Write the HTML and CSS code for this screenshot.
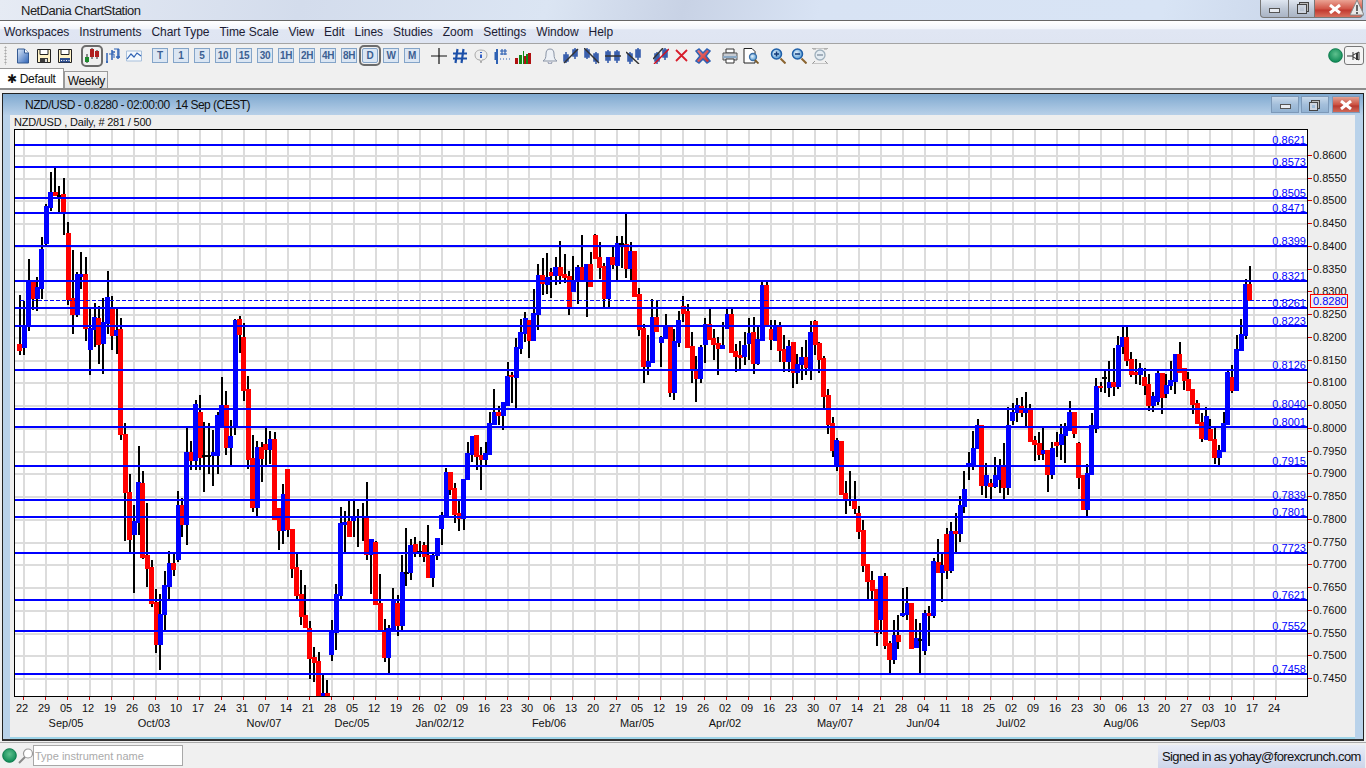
FILE: index.html
```html
<!DOCTYPE html>
<html lang="en">
<head>
    <meta charset="UTF-8">
    <title>NetDania ChartStation</title>
    <link rel="stylesheet" href="styles.css">
</head>
<body>
    <svg class="defs" width="0" height="0">
        <defs>
            <linearGradient id="docFill" x1="0" y1="0" x2="1" y2="1"><stop offset="0" stop-color="#dbe8f8"/><stop offset="1" stop-color="#2f64b8"/></linearGradient>
            <linearGradient id="redFill" x1="0" y1="0" x2="1" y2="1"><stop offset="0" stop-color="#e88"/><stop offset="1" stop-color="#c22"/></linearGradient>
            <radialGradient id="ledFill" cx=".5" cy=".4" r=".6"><stop offset="0" stop-color="#5fc08e"/><stop offset="1" stop-color="#0c8a55"/></radialGradient>
            <radialGradient id="lensFill" cx=".4" cy=".4" r=".7"><stop offset="0" stop-color="#e6f2fb"/><stop offset="1" stop-color="#3f8fd0"/></radialGradient>
        </defs>
    </svg>

    <header class="titlebar">
        <span class="app-icon"></span>
        <span class="app-title">NetDania ChartStation</span>
        <div class="win-buttons">
            <span class="win-btn win-min"><i class="glyph-min"></i></span>
            <span class="win-btn win-max"><i class="glyph-max"></i></span>
            <span class="win-btn win-close"><svg width="14" height="10" viewBox="0 0 14 10"><path d="M2 1l10 8M12 1L2 9" stroke="#fff" stroke-width="3"/></svg></span>
            <svg class="warn" width="14" height="16" viewBox="0 0 14 16"><path d="M7 0L14 15H0z" fill="#e8e8e8" stroke="#888"/><path d="M7 5v6M7 12v2" stroke="#444" stroke-width="1.6"/></svg>
        </div>
    </header>

    <nav class="menubar">
        <span>Workspaces</span><span>Instruments</span><span>Chart Type</span><span>Time Scale</span><span>View</span><span>Edit</span><span>Lines</span><span>Studies</span><span>Zoom</span><span>Settings</span><span>Window</span><span>Help</span>
    </nav>

    <div class="toolbar">
        <span class="grip"></span>
        <svg class="tool first" viewBox="0 0 16 16"><path d="M2.5 1h7l4 4v10h-11z" fill="url(#docFill)" stroke="#355a92"/><path d="M9.5 1v4h4" fill="#fff" stroke="#355a92"/></svg>
        <svg class="tool" viewBox="0 0 16 16"><path d="M1.5 1.5h13v13h-13z" fill="#fff3c8" stroke="#222"/><path d="M4 1.5h8v5H4z" fill="#fff" stroke="#222"/><path d="M4 10h8v4.500H4z" fill="#3a3a3a"/><path d="M9 11h2v3H9z" fill="#ddd"/></svg>
        <svg class="tool" viewBox="0 0 16 16"><path d="M1.5 1.5h13v13h-13z" fill="#fff3c8" stroke="#222"/><path d="M4 1.5h8v5H4z" fill="#fff" stroke="#222"/><path d="M3 10h10v4.500H3z" fill="#2f4f90"/><path d="M4 12h1v1H4zM6.500 12h1v1h-1zM9 12h1v1H9zM11.500 12h1v1h-1z" fill="#fff"/></svg>
        <span class="tool-on group">
            <svg class="tool" viewBox="0 0 16 16"><path d="M3 6v9M8 0v11M13 2v9" stroke="#222"/><path d="M1 9h4v5H1z" fill="#1c8a2c"/><path d="M6 1h4v8H6z" fill="#b02020"/><path d="M11 3h4v6h-4z" fill="#b02020"/></svg>
        </span>
        <svg class="tool" viewBox="0 0 16 16"><path d="M2 5v10M1 14h2M7 2v10M7 4h3M13 1v10M11 9h4" stroke="#2f62b4" stroke-width="1.500" fill="none"/><path d="M4 6h5v4M9 1h5v9" stroke="#2f62b4" fill="none"/></svg>
        <svg class="tool" viewBox="0 0 16 16"><path d="M.5 13V3h15v10z" fill="#f4f8fc" stroke="#a8c0dc"/><path d="M1 11l4-5 3 3 3-4 4 3" stroke="#2f62b4" stroke-width="1.200" fill="none"/></svg>
        <span class="iv group">T</span><span class="iv">1</span><span class="iv">5</span><span class="iv">10</span><span class="iv">15</span><span class="iv">30</span><span class="iv">1H</span><span class="iv">2H</span><span class="iv">4H</span><span class="iv">8H</span><span class="iv iv-on">D</span><span class="iv">W</span><span class="iv">M</span>
        <svg class="tool group-sm" viewBox="0 0 16 16"><path d="M8 0v16M0 8h16" stroke="#111" stroke-width="1.200"/></svg>
        <svg class="tool" viewBox="0 0 16 16"><path d="M5.500 1L3.500 15M11.500 1l-2 14M1 5.500h14M1 10.500h14" stroke="#1b4fa8" stroke-width="2.200"/></svg>
        <svg class="tool" viewBox="0 0 16 16"><path d="M8 2c4 0 6 2 6 5s-2 5-5 5l-1 3-1-3c-3 0-5-2-5-5s2-5 6-5z" fill="#eee" stroke="#aaa"/><path d="M8 4v1M8 6.500V10" stroke="#2050c0" stroke-width="1.800"/></svg>
        <svg class="tool" viewBox="0 0 16 16"><path d="M3 1v15M1.500 4v8" stroke="#2f62b4" stroke-width="2"/><path d="M8 1v6M11 1v6M6 3h7M6 6h7M6 11h1M9 11h1M12 11h1M15 11h1" stroke="#2f62b4" stroke-width="1.200"/></svg>
        <svg class="tool" viewBox="0 0 16 16"><path d="M0 10h3v6H0zM9 8h2v8H9zM13 5h3v11h-3z" fill="#b01010"/><path d="M4 7h3v9H4zM8 3h1v13H8zM11 6h2v10h-2z" fill="#128a18"/></svg>
        <svg class="tool group" viewBox="0 0 16 16"><path d="M8 1c3 0 4 2 4 5 0 4 1 6 3 7H1c2-1 3-3 3-7 0-3 1-5 4-5z" fill="#eef1f6" stroke="#8a94a6"/><path d="M6 14a2 2 0 0 0 4 0" fill="#dde" stroke="#8a94a6"/></svg>
        <svg class="tool" viewBox="0 0 16 16"><path class="tb" d="M3 4v11M1 7h4v6H1zM12 0v11M10 2h4v6h-4z"/><path class="tl" d="M1 15L15 1"/></svg>
        <svg class="tool" viewBox="0 0 16 16"><path class="tb" d="M3 0v11M1 2h4v7H1zM12 4v12M10 6h4v7h-4z"/><path class="tl" d="M0 0l15 15"/></svg>
        <svg class="tool" viewBox="0 0 16 16"><path class="tb" d="M3 2v13M1 4h4v8H1zM12 2v13M10 4h4v8h-4z"/><path class="tl" d="M0 8h16"/></svg>
        <svg class="tool" viewBox="0 0 16 16"><path class="tb" d="M4 4v12M2 6h4v7H2zM12 0v12M10 2h4v7h-4z"/><path class="tl" d="M0 4l13 12"/></svg>
        <svg class="tool group" viewBox="0 0 16 16"><path class="tb" d="M4 4v12M2 6h4v7H2zM12 0v12M10 2h4v7h-4z"/><path class="tl" d="M0 11L10 0"/><path d="M1 16L16 1" stroke="#d01020" stroke-width="1.500"/></svg>
        <svg class="tool" viewBox="0 0 16 16"><path d="M2 2l11 11M13 2L2 13" stroke="#d81e2c" stroke-width="1.800"/></svg>
        <svg class="tool" viewBox="0 0 16 16"><path d="M1 3l3-2 4 4 4-4 3 2-4 5 4 5-3 2-4-4-4 4-3-2 4-5z" fill="url(#redFill)" stroke="#2f62b4" stroke-width="1.500"/></svg>
        <svg class="tool group" viewBox="0 0 16 16"><path d="M4 1h8v4H4z" fill="#fff" stroke="#333"/><path d="M1 5h14v7H1z" fill="#c8ccd2" stroke="#555"/><path d="M1 8h14v2H1z" fill="#8aa8c4"/><path d="M4 11h8v4H4z" fill="#fff" stroke="#333"/></svg>
        <svg class="tool" viewBox="0 0 16 16"><path d="M1 .5h8l3 3V15H1z" fill="#fff" stroke="#222"/><circle cx="10" cy="9" r="3.500" fill="url(#lensFill)" stroke="#3a6fa8" stroke-width="1.300"/><path d="M12 12l3.500 3.500" stroke="#7a5a28" stroke-width="1.800"/></svg>
        <svg class="tool group" viewBox="0 0 16 16"><circle cx="6.500" cy="6" r="5" fill="url(#lensFill)" stroke="#1f5fa8" stroke-width="1.500"/><path d="M4 6h5M6.500 3.500v5" stroke="#123a78" stroke-width="1.500"/><path d="M10.500 10.500l5 5" stroke="#8a6430" stroke-width="2"/></svg>
        <svg class="tool" viewBox="0 0 16 16"><circle cx="6.500" cy="6" r="5" fill="url(#lensFill)" stroke="#1f5fa8" stroke-width="1.500"/><path d="M4 6h5" stroke="#123a78" stroke-width="1.500"/><path d="M10.500 10.500l5 5" stroke="#8a6430" stroke-width="2"/></svg>
        <svg class="tool" viewBox="0 0 16 16"><circle cx="8" cy="7" r="5" fill="#e4ecf2" stroke="#9fb0bc" stroke-width="1.300"/><path d="M5 7h6" stroke="#7d8f9c" stroke-width="1.300"/><path d="M0 1V0h16v1M0 15v1h16v-1" stroke="#9a9a9a" fill="none"/><path d="M1 1h3M12 1h3M3 13l-2 2M13 13l2 2" stroke="#9a9a9a"/></svg>
        <div class="toolbar-right">
            <svg class="led" width="15" height="15" viewBox="0 0 15 15"><circle cx="7.500" cy="7.500" r="6.800" fill="url(#ledFill)" stroke="#0b7a4b"/></svg>
            <span class="pin"><svg width="14" height="12" viewBox="0 0 14 12"><path d="M0 6h6M6 2v8M6 5l6-3v8l-6-3" stroke="#333" fill="none"/><path d="M9 3h2v7H9z" fill="#333"/></svg></span>
        </div>
    </div>

    <div class="tabs">
        <span class="tab tab-on"><b>✱</b> Default</span>
        <span class="tab">Weekly</span>
    </div>

    <main class="mdi">
        <section class="chart-window">
            <div class="chart-title">
                <span class="app-icon small"></span>
                <span class="chart-name">NZD/USD - 0.8280 - 02:00:00&nbsp; 14 Sep (CEST)</span>
                <div class="chart-buttons">
                    <span class="cbtn"><i class="glyph-min"></i></span>
                    <span class="cbtn"><i class="glyph-max double"></i></span>
                    <span class="cbtn cbtn-close"><svg width="14" height="10" viewBox="0 0 14 10"><path d="M2 1l10 8M12 1L2 9" stroke="#fff" stroke-width="3"/></svg></span>
                </div>
            </div>
            <div class="chart-pane">
                <div class="chart-info">NZD/USD , Daily, # 281 / 500</div>
                <svg id="chart" class="chart" viewBox="10 129 1345 608" width="1345" height="608"></svg>
            </div>
        </section>
    </main>

    <footer class="statusbar">
        <svg class="led" width="15" height="15" viewBox="0 0 15 15"><circle cx="7.500" cy="7.500" r="6.800" fill="url(#ledFill)" stroke="#0b7a4b"/></svg>
        <svg class="search" width="16" height="16" viewBox="0 0 16 16"><circle cx="10" cy="5.500" r="4.500" fill="#fff" stroke="#999" stroke-width="1.200"/><path d="M7 9l-6 6" stroke="#8a8a8a" stroke-width="2"/></svg>
        <input class="instrument" type="text" placeholder="Type instrument name">
        <div class="signed-in">Signed in as yohay@forexcrunch.com</div>
    </footer>

    <script src="chart.js"></script>
</body>
</html>
```

FILE: styles.css
```css
* { box-sizing: border-box; }
html, body { margin: 0; height: 100%; }
body {
    width: 1366px;
    height: 768px;
    overflow: hidden;
    display: flex;
    flex-direction: column;
    font-family: "Liberation Sans", Arial, sans-serif;
    font-size: 12px;
    color: #111;
    background: #f0f0f0;
}
.defs { position: absolute; }

/* main window frame */
.titlebar {
    height: 21px;
    flex: none;
    display: flex;
    align-items: center;
    padding-left: 3px;
    background: linear-gradient(103deg, #e6ebf4 0, #d3dcec 22%, #dbe5f3 40%, #c8d2e5 50%, #d8e3f4 60%, #d8e4f5 85%, #c4d0e4 100%);
    border-bottom: 1px solid #666;
}
.app-icon {
    width: 13px;
    height: 12px;
    margin-right: 5px;
    background-image: radial-gradient(#666 40%, transparent 45%);
    background-size: 2px 2px;
}
.app-title { font-size: 13px; letter-spacing: -.5px; color: #222; }
.win-buttons {
    position: relative;
    margin-left: auto;
    margin-right: 3px;
    align-self: flex-start;
    display: flex;
    height: 18px;
}
.win-btn {
    height: 18px;
    display: flex;
    align-items: center;
    justify-content: center;
    border: 1px solid #777;
    border-top: 0;
    background: linear-gradient(#dfe6f0, #bcc6d4 55%, #aab4c4);
}
.win-min { width: 29px; border-radius: 0 0 0 4px; }
.win-max { width: 26px; border-left: 0; }
.win-close {
    width: 48px;
    border-left: 0;
    border-radius: 0 0 4px 0;
    padding-right: 8px;
    background: linear-gradient(#eba394, #d2584a 50%, #c23a30 60%, #d8705e);
}
.warn { position: absolute; right: -1px; top: 0; }
.glyph-min {
    width: 11px;
    height: 5px;
    background: #e8ecf2;
    border: 1px solid #555;
    margin-top: 3px;
}
.glyph-max {
    width: 10px;
    height: 10px;
    border: 1px solid #444;
    box-shadow: inset 0 0 0 2px #ccd3de, 2px -2px 0 -1px #bbb, 2px -2px 0 0 #444;
}
.glyph-max.double { width: 9px; height: 9px; margin: 3px 3px 0 0; }

.menubar {
    height: 23px;
    flex: none;
    display: flex;
    align-items: center;
    gap: 10px;
    padding: 0 0 1px 4px;
    letter-spacing: -.05px;
    color: #1c1c34;
    background: linear-gradient(#fff 0, #f2f5fb 35%, #e0e6f3 40%, #dfe5f2 100%);
    border-bottom: 1px solid #a4a4a4;
}

/* toolbar */
.toolbar {
    height: 25px;
    flex: none;
    display: flex;
    align-items: center;
    padding: 0 2px 2px 4px;
    gap: 5px;
}
.grip {
    width: 3px;
    height: 19px;
    background-image: radial-gradient(#aaa 45%, transparent 50%);
    background-size: 3px 3px;
}
.tool { width: 16px; height: 16px; flex: none; display: block; }
.tool.first { margin-left: 3px; }
.group { margin-left: 6px; }
.group-sm { margin-left: 6px; }
.tool-on {
    flex: none;
    outline: 2px solid #6c6c6c;
    outline-offset: 1px;
    border-radius: 2px;
    margin-right: 0;
}
.tb { stroke: #3a60ae; stroke-width: 1.6; fill: #3a60ae; }
.tl { stroke: #333; stroke-width: 1.5; fill: none; }
.iv {
    width: 16px;
    height: 15px;
    flex: none;
    text-align: center;
    font-size: 10px;
    font-weight: bold;
    line-height: 13px;
    letter-spacing: -.3px;
    color: #3b5f92;
    background: #dbe6f3;
    border: 1px solid #84a4c8;
}
.iv.group { margin-left: 5px; }
.iv-on { outline: 2px solid #6c6c6c; outline-offset: 1px; border-radius: 2px; }
.toolbar-right {
    margin-left: auto;
    display: flex;
    align-items: center;
    gap: 1px;
}
.pin {
    width: 20px;
    height: 19px;
    display: flex;
    align-items: center;
    justify-content: center;
    border: 1px solid #777;
    border-radius: 3px;
    background: #f4f4f4;
}

/* tabs */
.tabs {
    height: 21px;
    flex: none;
    display: flex;
    align-items: flex-end;
    letter-spacing: -.3px;
    border-bottom: 2px solid #8c8c8c;
}
.tab {
    height: 17px;
    padding: 2px 2px 0 3px;
    border: 1px solid #9a9a9a;
    border-bottom: 0;
    background: linear-gradient(#f4f4f4, #e4e4e4);
}
.tab-on {
    height: 20px;
    padding: 3px 7px 0 7px;
    border-left: 0;
    background: #fff;
}
.tab-on b { font-weight: normal; }

/* chart window */
.mdi { flex: 1; min-height: 0; padding: 3px 2px 1px; border-bottom: 1px solid #aaa; }
.chart-window {
    height: 100%;
    display: flex;
    flex-direction: column;
    border: 1px solid #222;
    background: #b9d2ea;
    border-bottom: 2px solid #333;
}
.chart-title {
    height: 21px;
    flex: none;
    display: flex;
    align-items: center;
    padding-left: 6px;
    background: linear-gradient(#7fa9d0, #b8d0e8);
}
.app-icon.small { width: 10px; height: 9px; margin-right: 6px; background-image: radial-gradient(#333 40%, transparent 45%); }
.chart-name { letter-spacing: -.5px; }
.chart-buttons { margin-left: auto; margin-right: 3px; display: flex; gap: 2px; }
.cbtn {
    width: 28px;
    height: 17px;
    display: flex;
    align-items: center;
    justify-content: center;
    border: 1px solid #7d99b8;
    background: linear-gradient(#c8d9ea, #a4bfdb 50%, #92b2d2);
}
.cbtn-close { background: linear-gradient(#e2a091, #cd5444 50%, #b83a30 60%, #d06a58); margin-left: 1px; }
.chart-pane {
    flex: 1;
    margin: 0 8px 0 7px;
    background: #eee;
    border-bottom: 2px solid #9ed4e8;
}
.chart-info { height: 14px; padding-left: 4px; line-height: 14px; font-size: 11px; letter-spacing: -.2px; }
.chart { display: block; }
.chart text { font-family: "Liberation Sans", Arial, sans-serif; font-size: 11px; }
.chart .axis { fill: #111; }
.chart .level { fill: #0000ff; text-anchor: end; }
.chart .tick-date { fill: #111; text-anchor: middle; }

/* status bar */
.statusbar {
    height: 25px;
    flex: none;
    display: flex;
    align-items: center;
    padding-left: 2px;
}
.search { margin-left: 1px; }
.instrument {
    width: 150px;
    height: 21px;
    margin-left: -1px;
    padding: 0 1px;
    border: 1px solid #a8a8a8;
    background: #fff;
    font: 11px "Liberation Sans", Arial, sans-serif;
}
.instrument::placeholder { color: #aaa; }
.signed-in {
    margin-left: auto;
    margin-right: 1px;
    width: 207px;
    height: 23px;
    align-self: flex-end;
    padding: 4px 0 0 4px;
    font-size: 13px;
    letter-spacing: -.6px;
    white-space: nowrap;
    color: #111;
    background: linear-gradient(#e8ecf6, #d8deef 60%, #cdd6ea);
}
```

FILE: chart.js
```js
// builds the candlestick chart, coordinates are page pixels (see viewBox)
const SVG_NS = 'http://www.w3.org/2000/svg';
const chart = document.getElementById('chart');

const PLOT = { left: 15, right: 1307, top: 130, bottom: 696 };

// wick top, body top, body bottom, wick bottom, colour (r = down, b = up, k = doji)
const CANDLES = `
295 344 351 355 r 301 327 348 355 b 259 281 327 331 b 281 282 299 310 r 277 287 299 311 b
237 249 289 299 b 204 206 244 245 b 172 192 208 211 b 168 192 196 196 r 186 195 197 212 k
178 194 212 235 r 222 233 300 305 r 250 298 315 334 r 272 274 315 317 b 252 274 277 289 b
257 274 329 341 r 307 328 350 375 b 303 317 330 347 b 306 318 345 364 r 298 322 344 374 b
271 297 324 334 b 296 307 336 350 r 307 330 336 354 b 318 329 435 440 r 423 434 493 541 r
474 492 540 552 r 505 521 535 593 b 446 482 523 535 b 471 483 558 559 r 503 555 569 587 r
560 567 604 607 r 589 602 645 653 r 594 614 645 670 b 571 585 615 630 b 551 563 587 599 b
554 563 570 576 r 491 505 560 562 b 498 505 525 537 r 427 452 525 545 b 441 452 461 470 r
400 404 461 470 b 395 412 458 470 r 422 455 457 492 k 423 455 457 474 k 430 452 456 486 b
412 415 456 474 b 377 405 427 427 b 391 405 448 455 r 420 436 448 465 b 319 320 428 435 b
316 319 335 353 r 323 337 391 401 r 376 389 460 469 r 435 458 508 512 r 441 447 508 516 b
442 447 459 482 r 428 444 450 465 r 431 439 450 464 b 432 439 520 520 r 508 508 531 550 r
484 494 531 544 b 469 469 530 537 r 529 529 569 578 r 554 567 596 600 r 570 594 617 625 r
585 615 628 628 r 621 628 659 679 r 647 657 663 682 r 652 661 697 697 r 675 693 697 697 b
680 693 697 697 r 620 630 655 661 b 584 594 633 650 b 507 523 596 600 b 511 522 525 552 b
500 521 537 537 r 500 516 521 537 b 509 516 518 547 k 503 516 518 541 k 482 517 555 560 r
539 539 555 594 b 541 542 605 605 r 574 603 630 630 r 619 630 658 662 r 625 628 658 673 b
588 599 630 630 b 595 603 626 636 r 555 572 626 630 b 528 572 574 586 k 539 545 573 580 b
537 544 552 557 r 541 551 553 557 k 542 545 557 562 r 525 555 578 578 r 553 555 578 587 b
538 538 556 560 b 512 515 529 545 b 468 472 518 518 b 472 472 490 495 r 483 488 515 523 r
500 513 519 531 r 479 479 519 530 b 442 453 480 480 b 436 436 455 462 b 435 435 457 470 r
447 455 460 490 r 442 453 460 467 b 412 423 455 455 b 389 412 425 425 b 406 412 416 425 r
402 402 416 430 b 362 376 406 406 b 372 375 377 403 r 338 347 378 408 b 319 332 349 354 b
312 318 334 342 b 320 320 341 358 r 289 313 341 341 b 264 275 315 330 b 258 275 284 295 r
253 277 285 294 b 268 272 276 298 r 257 267 276 285 b 241 267 276 284 r 254 274 278 283 r
271 276 308 315 r 256 280 292 292 b 265 267 281 304 b 235 267 280 281 r 264 264 281 317 b
252 264 287 287 r 234 235 259 259 r 242 257 268 279 r 263 266 299 308 r 257 257 299 308 b
247 257 265 269 r 236 243 266 280 b 236 243 245 268 k 214 244 269 278 r 242 251 269 280 b
251 251 297 297 r 288 294 330 336 r 324 328 367 383 r 335 361 367 375 b 299 317 363 363 b
301 317 332 332 r 336 337 343 367 b 314 326 339 339 b 327 327 393 397 r 329 341 393 400 b
311 320 343 347 b 296 306 314 322 r 304 311 348 348 r 332 346 370 383 r 356 370 379 402 r
345 347 379 383 b 318 324 345 363 b 307 324 340 340 r 329 338 345 360 r 337 343 349 375 r
322 345 349 349 b 309 314 329 329 b 307 314 353 353 r 344 351 357 372 r 341 355 358 370 r
332 345 357 365 b 318 333 344 360 b 317 332 364 374 r 327 339 364 365 b 281 285 341 341 b
281 285 326 326 r 320 329 340 350 r 320 326 341 341 b 322 326 351 362 r 335 349 362 372 r
340 346 362 372 b 342 342 373 388 r 354 364 373 384 b 347 357 365 380 b 340 357 368 375 r
321 332 370 380 b 320 321 345 355 r 342 343 360 373 r 356 358 397 410 r 389 395 425 434 r
417 423 451 457 r 438 440 466 471 b 441 441 495 495 r 481 493 499 514 r 471 499 501 506 r
481 500 509 514 r 506 513 532 539 r 520 530 566 572 r 564 564 582 599 r 571 580 591 600 r
589 589 633 646 r 576 576 620 634 b 573 576 646 649 r 641 643 660 673 r 620 635 660 664 b
615 635 642 649 r 588 613 616 617 b 587 603 615 620 b 603 603 649 649 r 619 638 648 648 b
623 639 641 675 k 610 613 651 655 b 606 613 616 646 r 558 561 616 618 b 539 562 573 573 r
553 565 573 602 b 528 534 571 579 r 522 531 571 573 b 513 531 534 554 r 496 505 534 542 b
471 489 507 513 b 452 463 466 480 b 431 448 466 470 b 419 425 449 449 b 425 425 486 495 r
463 475 486 498 b 479 483 487 499 r 457 475 487 488 b 459 465 480 493 b 443 465 488 499 r
407 425 488 495 b 403 412 421 425 b 398 405 413 422 b 397 406 413 417 r 392 408 413 426 b
404 410 442 442 r 436 440 445 461 r 432 443 455 460 r 428 450 454 460 b 450 450 475 492 r
442 448 475 479 b 432 442 446 457 r 424 434 445 460 b 423 427 436 463 b 401 412 431 431 b
412 412 434 438 r 442 443 478 489 r 475 475 510 510 r 464 473 510 516 b 413 425 475 475 b
378 386 429 433 b 382 386 388 392 r 371 377 379 393 k 361 382 388 397 b 348 382 387 396 r
336 345 387 389 b 327 337 347 354 b 327 337 361 366 r 352 359 375 377 r 359 372 375 384 r
363 368 375 385 b 368 377 386 395 r 374 384 406 411 r 392 396 406 412 b 371 373 402 405 b
373 373 398 414 r 374 385 394 398 b 361 380 386 390 b 354 354 382 394 b 342 354 373 373 r
368 368 381 390 r 372 379 391 391 r 389 389 405 414 r 400 403 424 424 r 413 422 439 442 r
407 416 440 440 b 419 429 441 441 r 428 439 458 464 r 445 450 458 465 b 412 423 452 452 b
370 372 425 425 b 365 377 391 393 r 335 349 391 391 b 319 334 351 351 b 279 284 336 339 b
266 284 301 301 r
`.trim().split(/\s+/);

const COLOURS = { r: '#ff0000', b: '#0000ff', k: '#000000' };

const LEVELS = [
    ['0.8621', 145], ['0.8573', 167], ['0.8505', 198], ['0.8471', 213], ['0.8399', 246],
    ['0.8321', 281], ['0.8261', 308], ['0.8223', 326], ['0.8126', 370], ['0.8040', 409],
    ['0.8001', 427], ['0.7915', 466], ['0.7839', 500], ['0.7801', 517], ['0.7723', 553],
    ['0.7621', 600], ['0.7552', 631], ['0.7458', 674]
];

const DAYS = ('22 29 05 12 19 26 03 10 17 24 31 07 14 21 28 05 12 19 26 02 09 16 23 30 06 13 20 27 ' +
    '05 12 19 26 02 09 16 23 30 07 14 21 28 04 11 18 25 02 09 16 23 30 06 13 20 27 03 10 17 24').split(' ');

const MONTHS = [
    ['Sep/05', 2], ['Oct/03', 6], ['Nov/07', 11], ['Dec/05', 15], ['Jan/02/12', 19], ['Feb/06', 24], ['Mar/05', 28],
    ['Apr/02', 32], ['May/07', 37], ['Jun/04', 41], ['Jul/02', 45], ['Aug/06', 50], ['Sep/03', 54]
];

function add(tag, attrs, text) {
    const el = document.createElementNS(SVG_NS, tag);
    for (const key in attrs) el.setAttribute(key, attrs[key]);
    if (text) el.textContent = text;
    chart.appendChild(el);
    return el;
}

function rect(x, y, w, h, fill) {
    return add('rect', { x: x, y: y, width: w, height: h, fill: fill, 'shape-rendering': 'crispEdges' });
}

const tickX = i => Math.round(23.3 + 21.965 * i);
const priceY = i => Math.round(155 + 22.74 * i);

rect(PLOT.left, PLOT.top, PLOT.right - PLOT.left, PLOT.bottom - PLOT.top, '#fff');

// grid
for (let i = 0; i < DAYS.length; i++) {
    rect(tickX(i), PLOT.top, 2, PLOT.bottom - PLOT.top, '#dcdcdc');
}
for (let i = 0; i < 24; i++) {
    rect(PLOT.left, priceY(i), PLOT.right - PLOT.left, 2, '#dcdcdc');
}

// candles, all wicks first so no wick runs over a neighbouring body
const candles = [];
for (let i = 0; i * 5 < CANDLES.length; i++) {
    const [high, top, bottom, low] = CANDLES.slice(i * 5, i * 5 + 4).map(Number);
    candles.push({ cx: 19.9 + 4.393 * i, high, top, bottom, low, colour: COLOURS[CANDLES[i * 5 + 4]] });
}
for (const c of candles) {
    rect(Math.round(c.cx) - 1, c.high, 2, Math.min(c.low, PLOT.bottom) - c.high, '#000');
}
for (const c of candles) {
    rect(Math.round(c.cx - 2.5), c.top, 5, Math.max(Math.min(c.bottom, PLOT.bottom) - c.top, 2), c.colour);
}

// support and resistance lines
for (const [label, y] of LEVELS) {
    add('text', { class: 'level', x: 1306, y: y - 1 }, label);
    rect(PLOT.left, y - 1, PLOT.right - PLOT.left, 2, '#0000ff');
}
add('line', { x1: 20, y1: 300.5, x2: 1306, y2: 300.5, stroke: '#0000ff', 'stroke-dasharray': '4 2', 'shape-rendering': 'crispEdges' });

// frame
add('path', { d: 'M14.5 129.5H1307.5V696.5H14.5Z', fill: 'none', stroke: '#000', 'shape-rendering': 'crispEdges' });

// price axis
for (let i = 0; i < 24; i++) {
    const label = (0.86 - i * 0.005).toFixed(4);
    rect(1308, priceY(i), 4, 1, '#d00000');
    add('text', { class: 'axis', x: 1313, y: priceY(i) + 4 }, label);
}
add('rect', { x: 1310.5, y: 294.5, width: 36.5, height: 12.5, fill: '#eee', stroke: '#f00', 'shape-rendering': 'crispEdges' });
add('text', { x: 1313, y: 305, fill: '#0000ff' }, '0.8280');

// time axis
DAYS.forEach((day, i) => {
    rect(tickX(i), 697, 1, 3, '#d00000');
    add('text', { class: 'tick-date', x: tickX(i) - 1, y: 712 }, day);
});
for (const [label, i] of MONTHS) {
    add('text', { class: 'tick-date', x: tickX(i) - 1, y: 727 }, label);
}
```
